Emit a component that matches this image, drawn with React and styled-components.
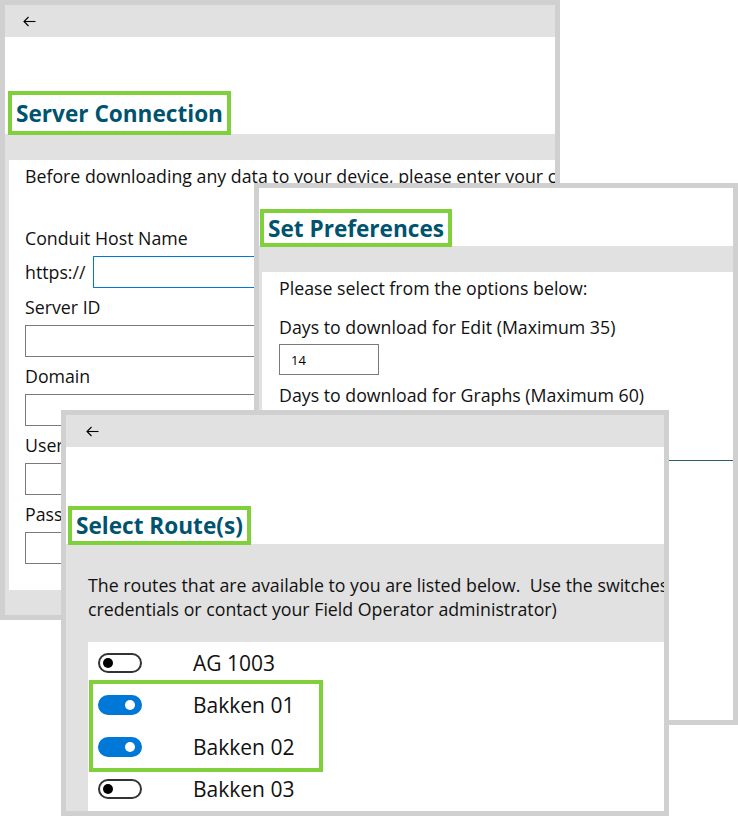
import styled, { createGlobalStyle } from 'styled-components';

const GlobalStyle = createGlobalStyle`
  * { box-sizing: border-box; }
  body {
    margin: 0;
    background: #ffffff;
    font-family: "Open Sans", "Noto Sans", sans-serif;
    color: #111111;
  }
`;

const Desktop = styled.div`
  position: relative;
  width: 738px;
  height: 816px;
  overflow: hidden;
  background: #ffffff;
`;

// each screenshot is a window laid on the canvas
const Window = styled.div`
  position: absolute;
  left: ${p => p.$x}px;
  top: ${p => p.$y}px;
  width: ${p => p.$w}px;
  height: ${p => p.$h}px;
  border: 5px solid #d0d0d0;
  background: #e1e1e1;
  display: flex;
  flex-direction: column;
  overflow: hidden;
`;

const TitleBar = styled.div`
  height: 32px;
  flex-shrink: 0;
  display: flex;
  align-items: center;
  padding-left: ${p => p.$pad || 18}px;
  background: #e1e1e1;
`;

const Header = styled.div`
  height: ${p => p.$h}px;
  flex-shrink: 0;
  background: #ffffff;
  display: flex;
  align-items: flex-end;
  padding-left: ${p => p.$pad}px;
`;

const HeadingBox = styled.h1`
  margin: 0 0 -1px 0;
  border: 4px solid #80d03c;
  padding: 0 ${p => p.$padX || 4}px;
  height: ${p => p.$h}px;
  display: flex;
  align-items: center;
  font-family: "Open Sans", "Noto Sans", sans-serif;
  font-weight: 700;
  font-size: 22.6px;
  color: #00536f;
  white-space: nowrap;
  background: #ffffff;
  position: relative;
`;

const Band = styled.div`
  height: 26px;
  flex-shrink: 0;
  background: #e1e1e1;
`;

const Panel = styled.div`
  flex: 1;
  background: #ffffff;
  margin: 0 0 ${p => p.$mb || 0}px ${p => p.$ml}px;
  padding: 5px ${p => p.$px}px 0 ${p => p.$px}px;
  display: flex;
  flex-direction: column;
  min-width: 0;
`;

const Text = styled.div`
  font-size: 17.75px;
  line-height: 22px;
  white-space: nowrap;
  margin-top: ${p => p.$mt || 0}px;
`;

const Label = styled.div`
  font-size: 17.75px;
  line-height: 22px;
  white-space: nowrap;
  margin-bottom: 7px;
`;

const Field = styled.div`
  display: flex;
  flex-direction: column;
  margin: ${p => p.$mt || 0}px 0 8px 0;
`;

const InputRow = styled.div`
  display: flex;
  align-items: center;
  gap: 7px;
  font-size: 17.75px;
`;

const Input = styled.div`
  height: ${p => p.$h || 32}px;
  width: ${p => p.$w ? `${p.$w}px` : '100%'};
  flex: ${p => p.$w ? 'none' : 1};
  margin-top: ${p => p.$mt || 0}px;
  border: 1px solid ${p => p.$focus ? '#0078d7' : '#7a7a7a'};
  background: #ffffff;
  display: flex;
  align-items: center;
  padding-left: 11px;
  font-size: 13px;
  color: #000000;
`;

const Rule = styled.div`
  height: 1px;
  background: #2b5f77;
  margin: 54px -17px 0 0;
`;

const Description = styled.div`
  height: 98px;
  flex-shrink: 0;
  padding: 29px 0 0 22px;
  background: #e1e1e1;
  font-size: 17.75px;
  line-height: 24px;
  white-space: pre;
  overflow: hidden;
`;

const RouteList = styled.div`
  flex: 1;
  background: #ffffff;
  margin-left: 22px;
  display: flex;
  flex-direction: column;
`;

const Highlight = styled.div`
  margin-left: 5px;
  width: 226px;
  outline: 4px solid #80d03c;
  position: relative;
`;

const Row = styled.div`
  height: 42px;
  display: flex;
  align-items: center;
  gap: 51px;
  padding-left: ${p => p.$inset ? 5 : 10}px;
  font-size: 21px;
  white-space: nowrap;
`;

const Toggle = styled.span`
  width: 44px;
  height: 20px;
  flex-shrink: 0;
  border-radius: 10px;
  border: 2px solid ${p => p.$on ? '#0078d7' : '#333333'};
  background: ${p => p.$on ? '#0078d7' : '#ffffff'};
  position: relative;
  &::after {
    content: '';
    position: absolute;
    top: 3px;
    left: ${p => p.$on ? '25px' : '3px'};
    width: 10px;
    height: 10px;
    border-radius: 50%;
    background: ${p => p.$on ? '#ffffff' : '#000000'};
  }
`;

const BackArrow = () => (
  <svg width="13" height="11" viewBox="0 0 13 11" fill="none" stroke="#000" strokeWidth="1.1">
    <path d="M12.5 5.5H1" />
    <path d="M5.5 1L1 5.5L5.5 10" />
  </svg>
);

const routes = [
  { name: 'AG 1003', on: false },
  { name: 'Bakken 01', on: true },
  { name: 'Bakken 02', on: true },
  { name: 'Bakken 03', on: false },
];

function RouteRow({ route, inset }) {
  return (
    <Row $inset={inset}>
      <Toggle $on={route.on} />
      <span>{route.name}</span>
    </Row>
  );
}

export default function App() {
  return (
    <>
      <GlobalStyle />
      <Desktop>
        <Window $x={0} $y={0} $w={560} $h={620}>
          <TitleBar $pad={18}><BackArrow /></TitleBar>
          <Header $h={97} $pad={3}>
            <HeadingBox $h={44} $padX={4}>Server Connection</HeadingBox>
          </Header>
          <Band />
          <Panel $ml={4} $px={16} $mb={25}>
            <Text>Before downloading any data to your device, please enter your credentials below.</Text>
            <Field $mt={40}>
              <Label>Conduit Host Name</Label>
              <InputRow>
                <span>https://</span>
                <Input $focus />
              </InputRow>
            </Field>
            <Field>
              <Label>Server ID</Label>
              <Input $w={420} />
            </Field>
            <Field>
              <Label>Domain</Label>
              <Input $w={420} />
            </Field>
            <Field>
              <Label>Username</Label>
              <Input $w={420} />
            </Field>
            <Field>
              <Label>Password</Label>
              <Input $w={420} />
            </Field>
          </Panel>
        </Window>

        <Window $x={254} $y={183} $w={484} $h={542}>
          <Header $h={58} $pad={1}>
            <HeadingBox $h={38} $padX={4}>Set Preferences</HeadingBox>
          </Header>
          <Band />
          <Panel $ml={3} $px={17}>
            <Text>Please select from the options below:</Text>
            <Text $mt={17}>Days to download for Edit (Maximum 35)</Text>
            <Input $w={100} $h={31} $mt={6}>14</Input>
            <Text $mt={9}>Days to download for Graphs (Maximum 60)</Text>
            <Rule />
          </Panel>
        </Window>

        <Window $x={61} $y={410} $w={608} $h={406}>
          <TitleBar $pad={20}><BackArrow /></TitleBar>
          <Header $h={97} $pad={2}>
            <HeadingBox $h={39} $padX={4}>Select Route(s)</HeadingBox>
          </Header>
          <Description>
            {'The routes that are available to you are listed below.  Use the switches to select the routes to download. (If a route is missing, check your\ncredentials or contact your Field Operator administrator)'}
          </Description>
          <RouteList>
            <RouteRow route={routes[0]} />
            <Highlight>
              <RouteRow route={routes[1]} inset />
              <RouteRow route={routes[2]} inset />
            </Highlight>
            <RouteRow route={routes[3]} />
          </RouteList>
        </Window>
      </Desktop>
    </>
  );
}
